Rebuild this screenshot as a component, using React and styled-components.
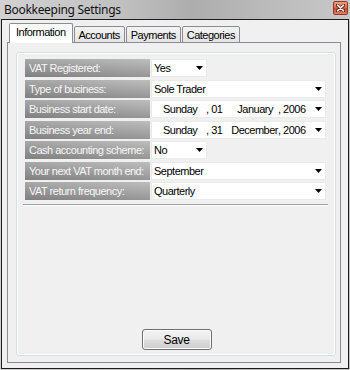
import styled, { createGlobalStyle } from "styled-components";

const GlobalStyle = createGlobalStyle`
  html, body {
    margin: 0;
    padding: 0;
    background: #f0f0f0;
  }
  * {
    box-sizing: border-box;
  }
`;

const Window = styled.div`
  width: 350px;
  height: 370px;
  display: flex;
  flex-direction: column;
  background: linear-gradient(to right, #d2d2d2 0%, #c0c0c0 35%, #adadad 55%, #bababa 75%, #c8c8c8 100%);
  font-family: "Liberation Sans", Arial, sans-serif;
`;

const TitleBar = styled.div`
  height: 19px;
  flex: none;
  display: flex;
  align-items: center;
  justify-content: space-between;
  padding: 0 2px 1px 4px;
`;

const Title = styled.span`
  font-family: "Noto Sans", "Open Sans", sans-serif;
  font-size: 12px;
  color: #111;
  letter-spacing: -0.3px;
`;

const CloseButton = styled.div`
  width: 15px;
  height: 14px;
  margin-top: -3px;
  border: 1px solid #8a3a2a;
  border-radius: 2px;
  background: linear-gradient(#f29c7e, #de6548 50%, #cf4a2c 55%, #e87c5c);
  display: flex;
  align-items: center;
  justify-content: center;
`;

const Client = styled.div`
  flex: 1;
  margin: 0 1px 1px 1px;
  border: 1px solid #1c1c1c;
  background: #f0f0f0;
  padding: 4px 7px 5px 5px;
  display: flex;
  flex-direction: column;
`;

const TabStrip = styled.div`
  display: flex;
  align-items: flex-end;
  height: 19px;
  padding-left: 2px;
  position: relative;
  z-index: 1;
  margin-bottom: -1px;
`;

const Tab = styled.div`
  height: ${(p) => (p.active ? "20px" : "17px")};
  padding: 0 ${(p) => (p.active ? "6px" : "4px")};
  margin-left: ${(p) => (p.active ? "0" : "1px")};
  border: 1px solid #898c95;
  border-bottom: ${(p) => (p.active ? "none" : "1px solid #898c95")};
  border-radius: 2px 2px 0 0;
  background: ${(p) => (p.active ? "#ffffff" : "linear-gradient(#f3f3f3, #e4e4e4)")};
  font-size: 11px;
  letter-spacing: -0.5px;
  color: #000;
  display: flex;
  align-items: ${(p) => (p.active ? "flex-start" : "center")};
  padding-top: ${(p) => (p.active ? "2px" : "0")};
`;

const Panel = styled.div`
  flex: 1;
  border: 1px solid #898c95;
  background: #f0f0f0;
  padding: 9px 4px 6px 8px;
  display: flex;
`;

const GroupBox = styled.div`
  flex: 1;
  border: 1px solid #d5dfe5;
  border-radius: 3px;
  box-shadow: inset 0 0 0 1px #ffffff;
  padding: 6px 7px 5px 8px;
  display: flex;
  flex-direction: column;
`;

const Rows = styled.div`
  display: flex;
  flex-direction: column;
  gap: 2.5px;
`;

const Row = styled.div`
  display: flex;
  height: 18px;
  gap: 1px;
`;

const Label = styled.div`
  width: 125px;
  flex: none;
  padding-left: 4px;
  display: flex;
  align-items: center;
  font-size: 11px;
  letter-spacing: -0.5px;
  color: #f6f6f6;
  background:
    linear-gradient(to right, rgba(0, 0, 0, 0.08), rgba(255, 255, 255, 0.1)),
    linear-gradient(#b6b6b6, #9c9c9c 60%, #8a8a8a);
`;

const Select = styled.div`
  width: ${(p) => (p.narrow ? "56px" : "175px")};
  background: #ffffff;
  border: 1px solid #eaeaea;
  display: flex;
  align-items: center;
  justify-content: space-between;
  padding: 0 3px 0 2px;
  font-size: 11px;
  letter-spacing: -0.5px;
  color: #000;

  svg {
    flex: none;
  }
`;

const DateText = styled.div`
  display: flex;
  padding-left: 9px;
  white-space: pre;
`;

const Part = styled.span`
  flex: none;
  width: ${(p) => p.w}px;
  padding-right: ${(p) => p.pr || 0}px;
  text-align: ${(p) => p.align || "left"};
`;

const Separator = styled.div`
  height: 2px;
  margin: 4px 0 0 -2px;
  border-top: 1px solid #a0a0a0;
  border-bottom: 1px solid #ffffff;
`;

const Spacer = styled.div`
  flex: 1;
`;

const SaveButton = styled.button`
  align-self: center;
  width: 70px;
  height: 21px;
  border: 1px solid #707070;
  border-radius: 3px;
  background: linear-gradient(#f2f2f2, #ebebeb 48%, #dddddd 52%, #cfcfcf);
  box-shadow: inset 0 0 0 1px #fcfcfc;
  font-family: "Liberation Sans", Arial, sans-serif;
  font-size: 12px;
  letter-spacing: -0.3px;
  color: #000;
  padding: 0;
`;

const Arrow = () => (
  <svg width="7" height="4" viewBox="0 0 7 4">
    <path d="M0 0h7L3.5 4z" fill="#000" />
  </svg>
);

const CloseIcon = () => (
  <svg width="9" height="8" viewBox="0 0 9 8">
    <path d="M1 1l7 6M8 1L1 7" stroke="#5a1e14" strokeWidth="3" strokeLinecap="round" />
    <path d="M1.5 1.2l6 5.6M7.5 1.2l-6 5.6" stroke="#f4ece8" strokeWidth="1.6" strokeLinecap="round" />
  </svg>
);

const DateValue = ({ day, month }) => (
  <Select>
    <DateText>
      <Part w={43}>Sunday</Part>
      <Part w={16}>, {day}</Part>
      <Part w={56} align="right" pr={month.length < 8 ? 5 : 0}>{month}</Part>
      <Part w={30}>, 2006</Part>
    </DateText>
    <Arrow />
  </Select>
);

const fields = [
  { label: "VAT Registered:", value: "Yes", narrow: true },
  { label: "Type of business:", value: "Sole Trader" },
  { label: "Business start date:", date: { day: "01", month: "January" } },
  { label: "Business year end:", date: { day: "31", month: "December" } },
  { label: "Cash accounting scheme:", value: "No", narrow: true },
  { label: "Your next VAT month end:", value: "September" },
  { label: "VAT return frequency:", value: "Quarterly" },
];

const tabs = ["Information", "Accounts", "Payments", "Categories"];

export default function App() {
  return (
    <>
      <GlobalStyle />
      <Window>
        <TitleBar>
          <Title>Bookkeeping Settings</Title>
          <CloseButton>
            <CloseIcon />
          </CloseButton>
        </TitleBar>
        <Client>
          <TabStrip>
            {tabs.map((t, i) => (
              <Tab key={t} active={i === 0}>
                {t}
              </Tab>
            ))}
          </TabStrip>
          <Panel>
            <GroupBox>
              <Rows>
                {fields.map((f) => (
                  <Row key={f.label}>
                    <Label>{f.label}</Label>
                    {f.date ? (
                      <DateValue day={f.date.day} month={f.date.month} />
                    ) : (
                      <Select narrow={f.narrow}>
                        <span>{f.value}</span>
                        <Arrow />
                      </Select>
                    )}
                  </Row>
                ))}
              </Rows>
              <Separator />
              <Spacer />
              <SaveButton>Save</SaveButton>
            </GroupBox>
          </Panel>
        </Client>
      </Window>
    </>
  );
}
